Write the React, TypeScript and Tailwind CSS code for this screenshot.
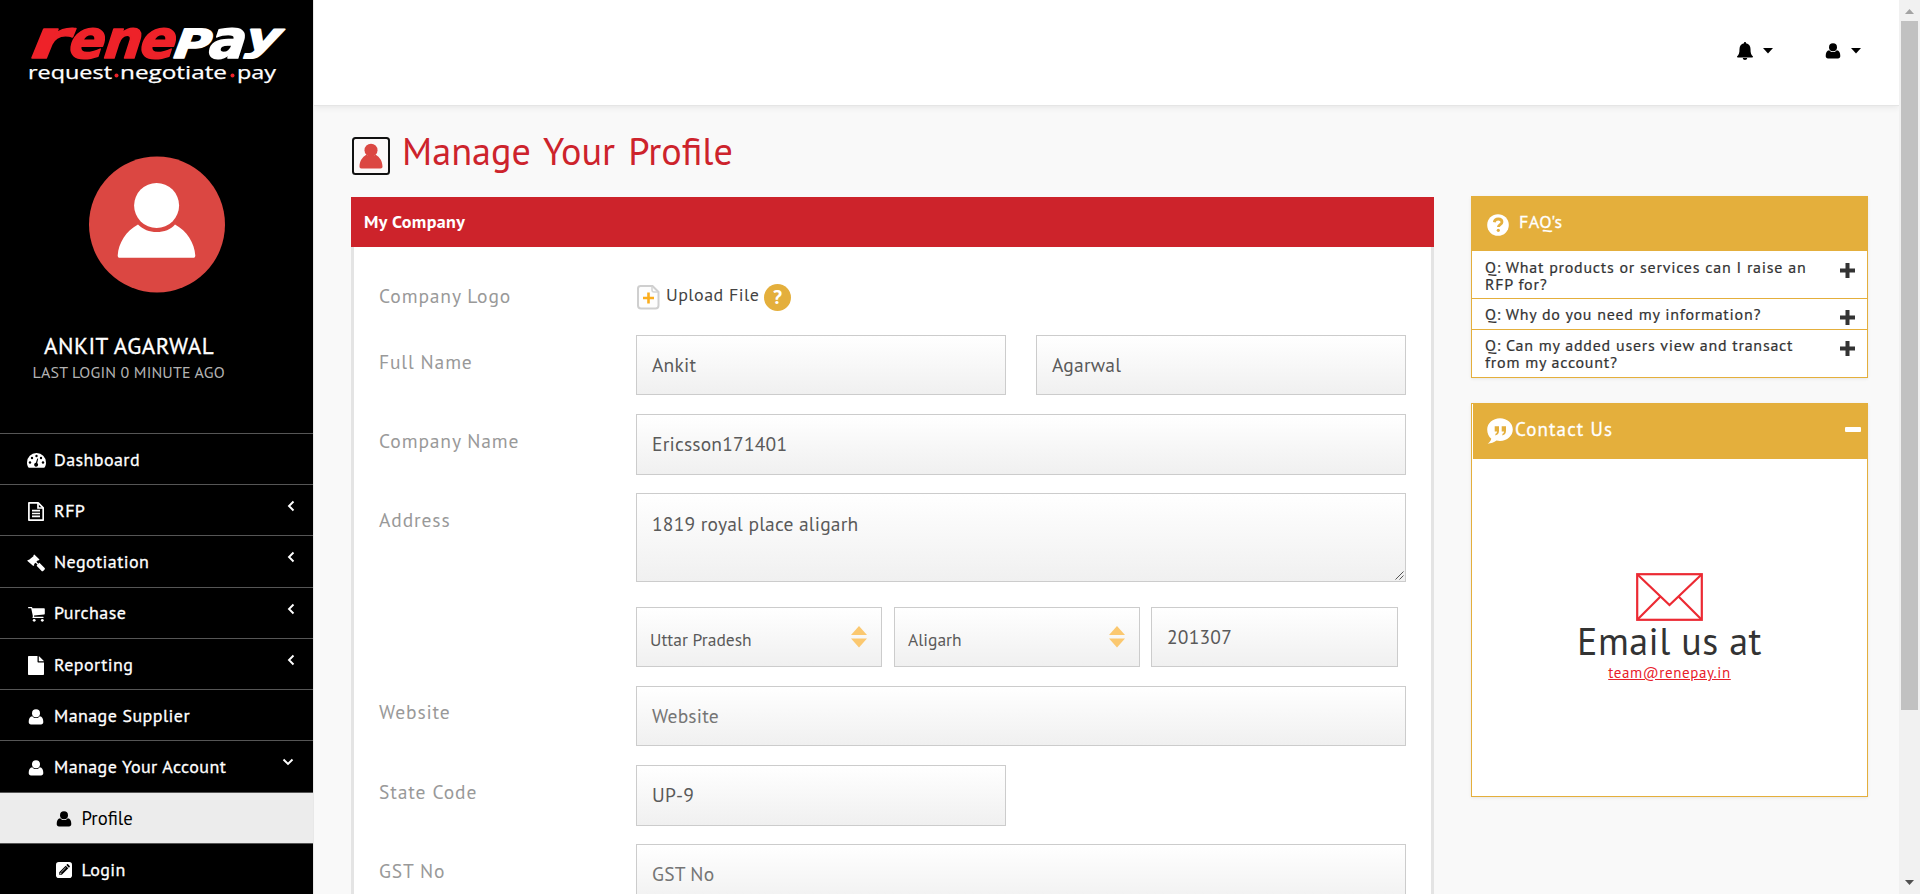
import type { ReactNode } from "react";

function UserGlyph({ className = "" }: { className?: string }) {
  return (
    <svg viewBox="0 0 16 16" className={className} fill="currentColor">
      <circle cx="8" cy="4.200" r="4" />
      <path d="M4.200 7.200C1.900 7.600.7 9.600.7 12.900c0 1.500.9 2.500 2.300 2.500h10c1.400 0 2.300-1 2.300-2.500 0-3.300-1.200-5.300-3.500-5.700C10.800 8.400 9.500 9.100 8 9.100S5.200 8.400 4.200 7.200z" />
    </svg>
  );
}

function DashboardGlyph() {
  return (
    <svg viewBox="0 0 19 15" className="h-[15px] w-[19px]">
      <path fill="#fff" d="M9.500 0A9.400 9.400 0 0 0 0 9.400c0 1.900.5 3.600 1.500 5 .2.300.4.400.8.400h14.400c.4 0 .6-.1.8-.4 1-1.400 1.500-3.100 1.500-5A9.400 9.400 0 0 0 9.500 0z" />
      <g fill="#000">
        <circle cx="3" cy="9.500" r="1.200" />
        <circle cx="5" cy="5" r="1.200" />
        <circle cx="9.500" cy="3" r="1.200" />
        <circle cx="14" cy="5" r="1.200" />
        <circle cx="16" cy="9.500" r="1.200" />
        <path d="M10.200 5.400l1 .3-1 4.300a2 2 0 1 1-1.300-.3z" />
      </g>
    </svg>
  );
}

function FileTextGlyph() {
  return (
    <svg viewBox="0 0 16 19" className="h-[19px] w-[16px]" fill="none" stroke="#fff" strokeWidth="1.700">
      <path d="M.9 .9h9.300l5 5v12.200H.9z" strokeLinejoin="round" />
      <path d="M10 1v5h5M4 8.700h8M4 11.500h8M4 14.300h8" />
    </svg>
  );
}

function FileGlyph() {
  return (
    <svg viewBox="0 0 16 19" className="h-[19px] w-[16px]" fill="#fff">
      <path d="M0 1c0-.6.4-1 1-1h8.500v5.500c0 .6.400 1 1 1H16V18c0 .6-.4 1-1 1H1c-.6 0-1-.4-1-1z" />
      <path d="M10.800.2c.2.100.4.200.6.400l4 4c.2.200.3.400.4.600h-5z" />
    </svg>
  );
}

function GavelGlyph() {
  return (
    <svg viewBox="0 0 18 18" className="h-[18px] w-[18px]" fill="#fff">
      <path d="M7.300.4 12.500 5.600l-.9 1L11 6.200 9.400 7.800l1.900 1.900 1.100-.9 5 4.900c.7.700.7 1.300 0 2l-1 1c-.7.700-1.400.7-2 0l-4.800-5 .9-1.100-1.900-1.900-1.700 1.600.5.600-1.100 1L.2 6.700l1-1 .6.400L6.700 1.900l-.4-.6z" />
    </svg>
  );
}

function CartGlyph() {
  return (
    <svg viewBox="0 0 17 15" className="h-[15px] w-[17px]" fill="#fff">
      <path d="M0 .7C0 .3.3 0 .7 0h2.800c.6 0 .8.500.9 1.200h11.700c.4 0 .7.300.7.700v4.800c0 .4-.3.600-.6.700L6 8.500c.1.500.3.900.1 1.300h9c.8 0 .8 1.300 0 1.300H5.200c-.9 0-.9-.9-.3-1.900L3.200 1.300H.7C.3 1.300 0 1.100 0 .7z" />
      <circle cx="6.200" cy="13.300" r="1.400" />
      <circle cx="14.300" cy="13.300" r="1.400" />
    </svg>
  );
}

function PencilSquareGlyph() {
  return (
    <svg viewBox="0 0 16 16" className="h-[16px] w-[16px]">
      <rect width="16" height="16" rx="2.800" fill="#fff" />
      <path d="M3.200 12.800v-2.600L9.700 3.700l2.600 2.600-6.500 6.500zM10.300 3.100l.8-.8c.3-.3.700-.3 1 0l1.600 1.600c.3.300.3.700 0 1l-.8.800z" fill="#000" />
      <path d="M5.200 10.200l4.600-4.600M4.300 10.600v1.100h1.100" stroke="#fff" strokeWidth=".7" fill="none" />
    </svg>
  );
}

function Logo() {
  return (
    <svg viewBox="0 0 270 80" className="block h-[80px] w-[270px] overflow-visible">
      <g transform="translate(0 46) skewX(-7) translate(0 -46)" fontFamily="'DejaVu Sans', sans-serif" fontWeight="700" fontStyle="oblique" strokeWidth="1.600" strokeLinejoin="round">
        <g fill="#ee2229" stroke="#ee2229" fontSize="53">
          <text x="9" y="46" textLength="38" lengthAdjust="spacingAndGlyphs">r</text>
          <text x="47" y="46" textLength="36" lengthAdjust="spacingAndGlyphs">e</text>
          <text x="82" y="46" textLength="38" lengthAdjust="spacingAndGlyphs">n</text>
          <text x="118" y="46" textLength="36" lengthAdjust="spacingAndGlyphs">e</text>
        </g>
        <g fill="#fff" stroke="#fff">
          <text x="152" y="46" fontSize="40" textLength="37" lengthAdjust="spacingAndGlyphs">P</text>
          <text x="187" y="46" fontSize="53" textLength="37" lengthAdjust="spacingAndGlyphs">a</text>
          <text x="223" y="38" fontSize="38" textLength="35" lengthAdjust="spacingAndGlyphs">y</text>
        </g>
      </g>
      <g fontFamily="'Open Sans', sans-serif" fontSize="17.500" fill="#fff" stroke="#fff" strokeWidth=".25">
        <text x="7" y="67" textLength="84" lengthAdjust="spacingAndGlyphs">request</text>
        <text x="99" y="67" textLength="107" lengthAdjust="spacingAndGlyphs">negotiate</text>
        <text x="216" y="67" textLength="39" lengthAdjust="spacingAndGlyphs">pay</text>
      </g>
      <circle cx="95.500" cy="63.500" r="2" fill="#ee2229" />
      <circle cx="211.500" cy="63.500" r="2" fill="#ee2229" />
    </svg>
  );
}

function Chevron({ open }: { open?: boolean }) {
  return (
    <svg viewBox="0 0 12 12" className={open ? "mr-[19px] -mt-[9px] size-[12px]" : "mr-[16px] -mt-[8px] size-[12px]"} fill="none" stroke="#fff" strokeWidth="1.900">
      {open ? <path d="M1.500 3.500 6 8l4.500-4.500" /> : <path d="M8.500 1.500 4 6l4.500 4.500" />}
    </svg>
  );
}

function MenuItem({ icon, label, arrow, open, sub, active }: { icon: ReactNode; label: string; arrow?: boolean; open?: boolean; sub?: boolean; active?: boolean }) {
  return (
    <a
      className={
        "flex h-[51.25px] shrink-0 items-center border-t border-[#565656] leading-[26px] " +
        (sub ? "pl-[54px] " : "pl-[26.500px] ") +
        (active ? "bg-[#ececec] text-[18.700px] text-black" : "bg-black text-[18px] tracking-[0.42px] text-white [-webkit-text-stroke:0.3px_#fff]")
      }
    >
      <span className="mt-[3px] flex w-[19px] items-center justify-center">{icon}</span>
      <span className="ml-[8.500px] mt-[1.500px] flex-1">{label}</span>
      {arrow && <Chevron open={open} />}
    </a>
  );
}

function Row({ label, h, children }: { label: string; h: string; children: ReactNode }) {
  return (
    <div className={"flex " + h}>
      <div className="w-[257px] shrink-0 pt-[13.500px] text-[19.500px] leading-[26px] tracking-[0.880px] text-[#999]">{label}</div>
      <div className="flex flex-1 items-start">{children}</div>
    </div>
  );
}

const box = "border border-[#ccc] bg-linear-to-b from-white to-[#f0f0f0] text-[#5a5a5a] ";

function Field({ children, w = "w-full", muted }: { children: ReactNode; w?: string; muted?: boolean }) {
  return (
    <div className={box + "h-[60.400px] px-[15px] pt-[15px] text-[19.500px] leading-[28px] tracking-[0.2px] " + w + (muted ? " text-[#757575]" : "")}>{children}</div>
  );
}

function SelectBox({ children }: { children: ReactNode }) {
  return (
    <div className={box + "flex h-[60.400px] w-[246px] justify-between pl-[13px] pr-[14px] text-[17.500px]"}>
      <span className="pt-[19px] leading-[26px]">{children}</span>
      <svg viewBox="0 0 16 22" className="mt-[18px] h-[22px] w-[16px]" fill="#fbc870">
        <path d="M8 0l8 9H0zM8 21.500l8-9H0z" />
      </svg>
    </div>
  );
}

function Question({ q, h }: { q: string; h: string }) {
  return (
    <div className={"flex items-start justify-between border-b border-[#e4af3c] bg-white pl-[13px] pr-[12px] " + h}>
      <div className="w-[335px] text-[16px] leading-[17px] tracking-[0.760px] text-[#333] [-webkit-text-stroke:0.2px_#333]">{q}</div>
      <svg viewBox="0 0 15 15" className="mt-[4px] size-[15px]" fill="#333">
        <path d="M5.500 0h4v5.500H15v4H9.500V15h-4V9.500H0v-4h5.500z" />
      </svg>
    </div>
  );
}

function Caret() {
  return (
    <svg viewBox="0 0 10 6" className="h-[6px] w-[10px]" fill="#000">
      <path d="M0 0h10L5 5.500z" />
    </svg>
  );
}

export default function App() {
  return (
    <div className="flex h-[894px] w-[1920px] overflow-hidden bg-[#f9f9f9] font-['PT_Sans','Noto_Sans',sans-serif]">
      <aside className="flex h-full w-[313px] shrink-0 flex-col overflow-hidden bg-black">
        <div className="pl-[21px] pt-[12px]">
          <Logo />
        </div>
        <svg viewBox="0 0 136 137" className="ml-[89px] mt-[64px] h-[137px] w-[136px] shrink-0">
          <circle cx="68" cy="68.500" r="68" fill="#db4742" />
          <path d="M49 68.500C37 75 29.500 87 28.700 99.500c0 1.500.8 2.300 2 2.300h73.600c1.200 0 2-.8 2-2.300C105.500 87 98 75 86 68.500 82 73.500 75 76 67.700 76S54 73.500 49 68.500z" fill="#fff" />
          <circle cx="67.600" cy="49.500" r="22.500" fill="#fff" />
        </svg>
        <div className="flex h-[140.250px] flex-col pt-[37.500px]">
          <div className="pl-[44px] text-[23px] leading-[30px] tracking-[0.480px] text-white [-webkit-text-stroke:0.3px_#fff]">ANKIT AGARWAL</div>
          <div className="pl-[32.500px] text-[16px] leading-[22px] tracking-[0.150px] text-[#b3b3b3]">LAST LOGIN 0 MINUTE AGO</div>
        </div>
        <nav className="flex flex-col">
          <MenuItem icon={<DashboardGlyph />} label="Dashboard" />
          <MenuItem icon={<FileTextGlyph />} label="RFP" arrow />
          <MenuItem icon={<GavelGlyph />} label="Negotiation" arrow />
          <MenuItem icon={<CartGlyph />} label="Purchase" arrow />
          <MenuItem icon={<FileGlyph />} label="Reporting" arrow />
          <MenuItem icon={<UserGlyph className="size-[16px]" />} label="Manage Supplier" />
          <MenuItem icon={<UserGlyph className="size-[16px]" />} label="Manage Your Account" arrow open />
          <MenuItem icon={<UserGlyph className="size-[16px]" />} label="Profile" sub active />
          <MenuItem icon={<PencilSquareGlyph />} label="Login" sub />
        </nav>
      </aside>

      <main className="flex h-full w-[1586px] shrink-0 flex-col overflow-hidden border-l border-[#e8e8e8]">
        <header className="flex h-[106px] shrink-0 items-start justify-end border-b border-[#e5e5e5] bg-white pr-[38px] pt-[42px] shadow-[0_2px_6px_rgba(0,0,0,0.07)]">
          <div className="flex items-center">
            <svg viewBox="0 0 16 18" className="h-[18px] w-[16px]" fill="#000">
              <path d="M8 0c.7 0 1.100.5 1 1.300 3 .6 4.500 2.900 4.500 5.700 0 4 .7 6 2.500 7.500 0 .6-.5 1.100-1.100 1.100H1.100C.5 15.600 0 15.100 0 14.500 1.800 13 2.500 11 2.500 7 2.500 4.200 4 1.900 7 1.300 6.900.5 7.300 0 8 0zM5.800 16h4.400c0 1.200-1 2-2.200 2s-2.200-.8-2.200-2z" />
            </svg>
            <span className="ml-[10px]"><Caret /></span>
          </div>
          <div className="ml-[52px] flex items-center pt-[1px]">
            <UserGlyph className="size-[16px]" />
            <span className="ml-[10px]"><Caret /></span>
          </div>
        </header>

        <div className="flex gap-[37px] pl-[37px]">
          <section className="w-[1083px] shrink-0">
            <div className="flex h-[91px]">
              <svg viewBox="0 0 38 38" className="ml-[1px] mt-[31px] size-[38px]">
                <rect x="1" y="1" width="36" height="36" rx="2.500" fill="#fbf8f8" stroke="#111" strokeWidth="2" />
                <circle cx="19" cy="13.200" r="6.500" fill="#db4742" />
                <path d="M14.500 17.500C10 20.500 7.700 24 7.500 29.500c0 1.300.6 2 2 2h19c1.400 0 2-.7 2-2-.2-5.500-2.500-9-7-12-2 2-7 2-9 0z" fill="#db4742" />
              </svg>
              <h1 className="ml-[12px] pt-[21px] text-[38.200px] leading-[48px] text-[#cd232c] [word-spacing:3px]">Manage Your Profile</h1>
            </div>
            <div className="h-[50px] bg-[#cd232b] pl-[13px] pt-[12px] text-[18px] font-bold leading-[26px] tracking-[0.4px] text-white">My Company</div>
            <div className="h-[700px] border-x-[3px] border-[#e4e4e4] bg-white pl-[25px]">
              <div className="flex h-[88px]">
                <div className="w-[257px] pt-[36px] text-[19.500px] leading-[26px] tracking-[0.880px] text-[#999]">Company Logo</div>
                <div className="flex">
                  <svg viewBox="0 0 24 26" className="mt-[37px] h-[26px] w-[24px]">
                    <path d="M4 2h12.500l6 6v13.500a3 3 0 0 1-3 3H5a3 3 0 0 1-3-3V4.500A2.500 2.500 0 0 1 4.500 2z" fill="#fdfdfd" stroke="#cfcfcf" strokeWidth="2" />
                    <path d="M16 2.500V6a2 2 0 0 0 2 2h4.500" fill="none" stroke="#d4d4d4" strokeWidth="1.500" />
                    <path d="M12.500 8.500v11M7 14h11" stroke="#fbad1d" strokeWidth="2.600" fill="none" />
                  </svg>
                  <span className="ml-[6px] pt-[35px] text-[18px] leading-[26px] tracking-[0.45px] text-[#444]">Upload File</span>
                  <span className="ml-[4.500px] mt-[36.500px] flex size-[27.500px] items-center justify-center rounded-full bg-[#e4af3c] text-[20px] font-bold leading-none text-white">?</span>
                </div>
              </div>
              <Row label="Full Name" h="h-[79.200px]">
                <Field w="w-[370px]">Ankit</Field>
                <div className="w-[30px]" />
                <Field w="w-[370px]">Agarwal</Field>
              </Row>
              <Row label="Company Name" h="h-[79.200px]">
                <Field w="w-[770px]">Ericsson171401</Field>
              </Row>
              <Row label="Address" h="h-[113.400px]">
                <div className={box + "relative h-[89px] w-[770px] px-[15px] pt-[16px] text-[19.500px] leading-[28px] tracking-[0.2px]"}>
                  1819 royal place aligarh
                  <svg viewBox="0 0 9 9" className="absolute bottom-[1px] right-[1px] size-[9px]" stroke="#555" strokeWidth="1" fill="none">
                    <path d="M.5 8.500l8-8M4.500 8.500l4-4" />
                  </svg>
                </div>
              </Row>
              <Row label="" h="h-[79.200px]">
                <div className="flex">
                  <SelectBox>Uttar Pradesh</SelectBox>
                  <div className="w-[12px]" />
                  <SelectBox>Aligarh</SelectBox>
                  <div className="w-[11px]" />
                  <Field w="w-[247px]">201307</Field>
                </div>
              </Row>
              <Row label="Website" h="h-[79.200px]">
                <Field w="w-[770px]" muted>Website</Field>
              </Row>
              <Row label="State Code" h="h-[79.200px]">
                <Field w="w-[370px]">UP-9</Field>
              </Row>
              <Row label="GST No" h="h-[79.200px]">
                <Field w="w-[770px]" muted>GST No</Field>
              </Row>
            </div>
          </section>

          <aside className="w-[397px] shrink-0 pt-[90px]">
            <div className="border-x border-[#e4af3c] shadow-[0_1px_3px_rgba(0,0,0,0.08)]">
              <div className="flex h-[55px] bg-[#e4af3c] pl-[15px]">
                <svg viewBox="0 0 22 22" className="mt-[17.500px] size-[22px]">
                  <circle cx="11" cy="11" r="10.800" fill="#fff" />
                  <path d="M7.300 8.300C7.600 6 9 5 11.200 5c2.300 0 3.800 1.200 3.800 3.100 0 2.600-3.600 2.500-3.600 5" stroke="#e4af3c" strokeWidth="2.800" fill="none" />
                  <circle cx="11.300" cy="16.300" r="1.600" fill="#e4af3c" />
                </svg>
                <span className="ml-[10px] pt-[13px] text-[18px] leading-[26px] tracking-[0.4px] text-white [-webkit-text-stroke:0.3px_#fff]">FAQ's</span>
              </div>
              <Question q="Q: What products or services can I raise an RFP for?" h="h-[48px] pt-[7.500px]" />
              <Question q="Q: Why do you need my information?" h="h-[31px] pt-[7px]" />
              <Question q="Q: Can my added users view and transact from my account?" h="h-[48px] pt-[7px]" />
            </div>
            <div className="mt-[25px] h-[394px] border border-[#e4af3c] bg-white shadow-[0_1px_3px_rgba(0,0,0,0.08)]">
              <div className="ml-[1px] flex h-[55px] bg-[#e4af3c] pl-[14px] pr-[6px]">
                <svg viewBox="0 0 26 26" className="mt-[14px] h-[26px] w-[26px]">
                  <path d="M13 .3c7.200 0 12.800 5 12.800 11.200S20.200 23 13 23c-1.300 0-2.400-.1-3.500-.4C7 24.500 4 25.600.6 25.700c1.900-1.400 3.200-3 3.700-5C1.700 18.600.2 15.300.2 11.500.2 5.300 5.800.3 13 .3z" fill="#fff" />
                  <path d="M7.700 8.300h4.300v4.500c0 2.600-1.300 4.200-3.600 4.700v-1.700c1.100-.5 1.600-1.200 1.600-2.400H7.700zM14.700 8.300H19v4.500c0 2.600-1.300 4.200-3.600 4.700v-1.700c1.100-.5 1.600-1.200 1.600-2.400h-2.300z" fill="#e4af3c" />
                </svg>
                <span className="ml-[2px] flex-1 pt-[11px] text-[19px] leading-[28px] tracking-[1.100px] text-white [-webkit-text-stroke:0.3px_#fff]">Contact Us</span>
                <span className="mt-[23px] h-[5px] w-[16px] rounded-[1px] bg-white" />
              </div>
              <div className="flex flex-col items-center pt-[114px]">
                <svg viewBox="0 0 67 48" className="h-[48px] w-[67px]" fill="none" stroke="#ec2a33" strokeWidth="2.200">
                  <rect x="1.200" y="1.200" width="64.600" height="45.600" />
                  <path d="M2 2l31.500 30L65 2M2 46l22.500-22.500M65 46 42.500 23.500" />
                </svg>
                <div className="-mt-[2px] text-[38px] leading-[43px] tracking-[0.45px] text-[#333]">Email us at</div>
                <a className="mt-[1px] text-[15px] leading-[20px] tracking-[0.6px] text-[#e8202a] underline">team@renepay.in</a>
              </div>
            </div>
          </aside>
        </div>
      </main>

      <div className="flex h-full w-[21px] shrink-0 flex-col items-center bg-[#f1f1f1]">
        <div className="flex h-[21px] items-center">
          <svg viewBox="0 0 9 5" className="mt-[2px] h-[5px] w-[9px]" fill="#a3a3a3"><path d="M0 5h9L4.500 0z" /></svg>
        </div>
        <div className="h-[689px] w-[17px] bg-[#c1c1c1]" />
        <div className="flex flex-1 items-end pb-[9px]">
          <svg viewBox="0 0 9 5" className="h-[5px] w-[9px]" fill="#505050"><path d="M0 0h9L4.500 5z" /></svg>
        </div>
      </div>
    </div>
  );
}
